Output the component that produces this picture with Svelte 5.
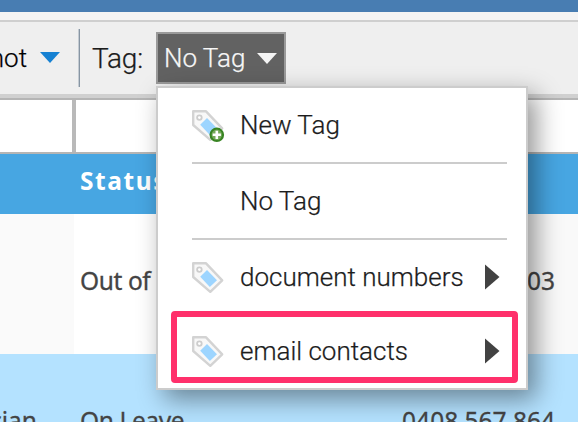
<script>
  const items = [
    { label: 'New Tag', icon: true, add: true },
    { label: 'No Tag' },
    { label: 'document numbers', icon: true, sub: true },
    { label: 'email contacts', icon: true, sub: true }
  ];
</script>

<div class="screen">
  <div class="titlebar"></div>
  <div class="toolbar">
    <div class="clip"><span class="hot">Snapshot</span></div>
    <svg class="caret" width="22" height="13" viewBox="0 0 22 13"><path d="M1 1h20L11 12z" fill="#1681d2" /></svg>
    <div class="rule"></div>
    <span class="label">Tag:</span>
    <div class="dropdown">
      <div class="button">
        <span>No Tag</span>
        <svg width="22" height="13" viewBox="0 0 22 13"><path d="M1 1h20L11 12z" fill="#f4f4f4" /></svg>
      </div>
      <div class="menu">
        {#each items as item, i}
          {#if i === 1 || i === 2}<div class="separator"></div>{/if}
          <div class="item">
            <div class="icon">
              {#if item.icon}
                <svg width="34" height="34" viewBox="0 0 34 34">
                  <path d="M1.2 1.2h12.6l16.4 17.2-11.9 11.4L1.2 15z" fill="#f8f8f8" stroke="#d3d3d3" stroke-width="2.4" stroke-linejoin="round" />
                  <circle cx="7.4" cy="7.6" r="2.3" fill="#fff" stroke="#cdcdcd" stroke-width="1.8" />
                  <path d="M15 8l10 10.3-7.2 6.7-9.6-10.3z" fill="#9dd5ff" />
                  {#if item.add}
                    <circle cx="24.8" cy="24.8" r="7.3" fill="#388423" />
                    <circle cx="24.8" cy="24.8" r="5.2" fill="#75a95b" />
                    <path d="M24.8 20.7v8.2M20.7 24.8h8.2" stroke="#fff" stroke-width="2.6" />
                  {/if}
                </svg>
              {/if}
            </div>
            <span class="text">{item.label}</span>
            {#if item.sub}
              <svg class="arrow" width="16" height="28" viewBox="0 0 16 28"><path d="M1 1.5L15.5 14 1 26.5z" fill="#424242" /></svg>
            {/if}
          </div>
        {/each}
        <div class="highlight"></div>
      </div>
    </div>
  </div>
  <div class="filters"><div></div><div></div></div>
  <div class="row head"><div class="first"></div><span class="status">Status</span></div>
  <div class="row plain">
    <div class="first"></div><span class="status">Out of</span><span class="phone">03</span>
  </div>
  <div class="row alt">
    <div class="first"><span>Technician</span></div><span class="status">On Leave</span><span class="phone">0408 567 864</span>
  </div>
</div>

<style>
  :global(body) { margin: 0; overflow: hidden; }
  .screen { width: 578px; height: 422px; overflow: hidden; background: #fff; font-family: Roboto, sans-serif; }
  .screen, .screen * { box-sizing: border-box; }
  svg { display: block; flex: none; }
  .titlebar { height: 12px; background: #487db2; }
  .toolbar {
    display: flex; height: 88px; background: #efefef;
    border-top: 8px solid #f4f4f4; border-bottom: 2px solid #b5b5b5;
    box-shadow: inset 0 2px #cfcfcf, inset 0 -4px #d0d0d0;
    font-size: 26px; font-weight: 300; color: #1c1c1c; white-space: nowrap;
    -webkit-text-stroke: .25px;
  }
  .clip { width: 27px; height: 72px; overflow: hidden; display: flex; justify-content: flex-end; }
  .hot { color: #000; line-height: 77px; }
  .caret { margin: 31px 17px 0 12px; }
  .rule { width: 2px; height: 58px; margin-top: 9px; background: linear-gradient(90deg, #c4cbd2 50%, #8795a3 50%); }
  .label { width: 76px; padding-left: 12px; line-height: 77px; font-size: 28px; letter-spacing: -.2px; }
  .dropdown { position: relative; width: 130px; margin-top: 12px; }
  .button {
    display: flex; align-items: center; height: 52px; padding: 0 6px;
    border: 2px solid #9a9a9a; background: #626262; color: #f6f6f6;
  }
  .button span { width: 93px; line-height: 50px; }
  .button svg { margin-top: 1px; }
  .menu {
    position: absolute; left: 0; top: 54px; z-index: 2; width: 372px; height: 304px;
    padding: 0 19px 0 34px; border: 2px solid #ccc; background: #fff;
    box-shadow: 8px 9px 24px rgba(0, 0, 0, .42);
  }
  .item { display: flex; height: 74px; align-items: center; }
  .icon { width: 48px; height: 34px; margin-top: 4px; }
  .text { line-height: 74px; }
  .arrow { margin: 0 7px 0 auto; }
  .separator { height: 2px; background: #ccc; }
  .highlight {
    position: absolute; left: 13px; top: 222.5px; width: 347px; height: 72px;
    border: 6px solid #ff306b; border-radius: 4px;
  }
  .filters { display: flex; height: 54px; border-bottom: 2px solid #b5b5b5; }
  .filters div:first-child { width: 76px; border-right: 4px solid #b9b9b9; }
  .row { display: flex; font-family: "Noto Sans", sans-serif; font-size: 24.5px; color: #444; white-space: nowrap; -webkit-text-stroke: .3px; }
  .first { width: 74px; overflow: hidden; }
  .status { padding-left: 6px; letter-spacing: -.4px; }
  .head { height: 60px; background: #47a6e2; color: #fff; font-weight: 700; line-height: 54px; -webkit-text-stroke: 0; }
  .head .status { letter-spacing: 1.6px; }
  .plain { height: 140px; line-height: 134px; background: linear-gradient(90deg, #fafafa 74px, #fff 74px, #fff 400px, #f9f9f9 400px); }
  .alt { height: 140px; line-height: 134px; background: #b4e2ff; }
  .alt .first { display: flex; justify-content: flex-end; padding-right: 37px; }
  .phone { margin-left: auto; padding-right: 23px; }
</style>
